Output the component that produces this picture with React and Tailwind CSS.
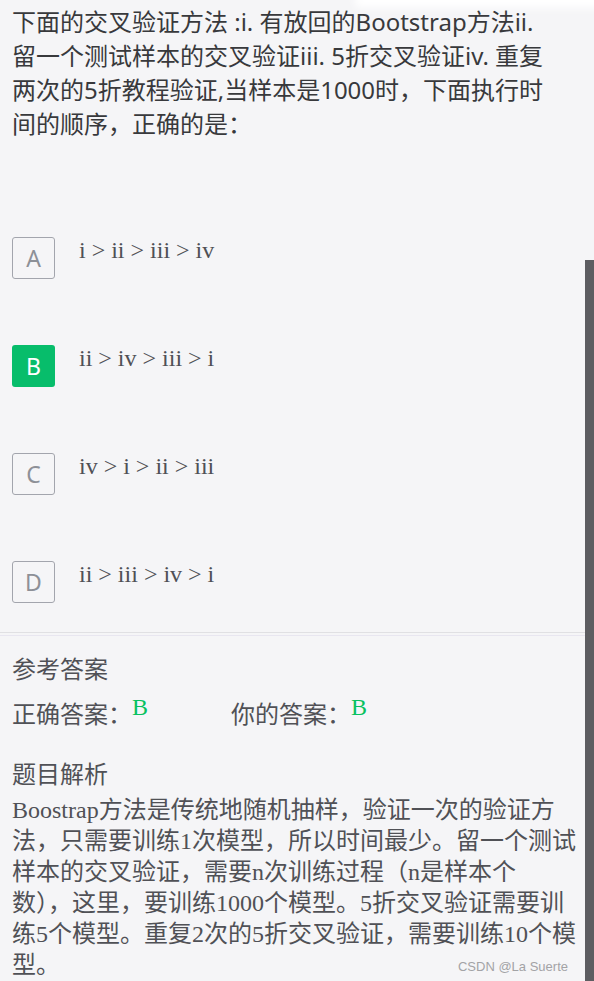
import React from 'react';

const options = [
  { key: 'A', text: 'i > ii > iii > iv' },
  { key: 'B', text: 'ii > iv > iii > i', selected: true },
  { key: 'C', text: 'iv > i > ii > iii' },
  { key: 'D', text: 'ii > iii > iv > i' },
];

const sans = { fontFamily: '"Noto Sans", "Noto Sans CJK SC", sans-serif' };
const serif = { fontFamily: '"Liberation Serif", "Noto Sans CJK SC", serif' };

const OptionRow = ({ option }) => (
  <div className="flex items-start">
    <div
      className={
        option.selected
          ? 'w-[43px] h-[42px] flex items-center justify-center rounded-[3px] bg-[#07bd6b] text-white text-[23px]'
          : 'w-[43px] h-[42px] flex items-center justify-center rounded-[3px] border border-[#a3a5ad] text-[#8d9097] text-[23px]'
      }
      style={sans}
    >
      {option.key}
    </div>
    <div className="ml-[24px] text-[24px] leading-[27px] text-[#4f5055]" style={serif}>
      {option.text}
    </div>
  </div>
);

const App = () => {
  return (
    <div className="relative w-full h-[981px] overflow-hidden bg-[#f5f5f7]">
      {/* faint light at the top edge */}
      <div className="absolute top-[-8px] right-[-20px] w-[260px] h-[16px] rounded-full bg-white blur-[4px]"></div>

      <div className="relative pl-[12px] pr-[16px]">
        <p className="pt-[5px] text-[24px] leading-[34px] text-[#38393c]" style={sans}>
          下面的交叉验证方法 :i. 有放回的Bootstrap方法ii.<br />
          留一个测试样本的交叉验证iii. 5折交叉验证iv. 重复<br />
          两次的5折教程验证,当样本是1000时，下面执行时<br />
          间的顺序，正确的是：
        </p>

        <div className="mt-[96px] flex flex-col gap-[66px]">
          {options.map(option => (
            <OptionRow key={option.key} option={option} />
          ))}
        </div>
      </div>

      <div className="mt-[29px] mr-[9px] h-[4px] border-t border-b border-t-[#e0e0e3] border-b-[#e8e6f0]"></div>

      <div className="pl-[12px] pr-[16px] text-[24px] text-[#505156]" style={sans}>
        <div className="pt-[16px] leading-[34px]">参考答案</div>
        <div className="mt-[4px] leading-[34px]">
          <span className="inline-block w-[219px]">
            正确答案：<span className="text-[#07c160] align-[8px]" style={serif}>B</span>
          </span>
          你的答案：<span className="text-[#07c160] align-[8px]" style={serif}>B</span>
        </div>

        <div className="mt-[26px] leading-[34px]">题目解析</div>
        <p className="mt-[4px] leading-[31px]" style={serif}>
          Boostrap方法是传统地随机抽样，验证一次的验证方法，只需要训练1次模型，所以时间最少。留一个测试样本的交叉验证，需要n次训练过程（n是样本个<br />数），这里，要训练1000个模型。5折交叉验证需要训练5个模型。重复2次的5折交叉验证，需要训练10个模型。
        </p>
      </div>

      <div
        className="absolute right-[26px] bottom-[5px] text-[13px] text-[#a3a3a6]"
        style={{ fontFamily: '"Liberation Sans", Arial, sans-serif' }}
      >
        CSDN @La Suerte
      </div>

      {/* scrollbar thumb */}
      <div className="absolute right-0 top-[260px] bottom-0 w-[9px] bg-[#5d5d61]"></div>
    </div>
  );
};

export default App;
